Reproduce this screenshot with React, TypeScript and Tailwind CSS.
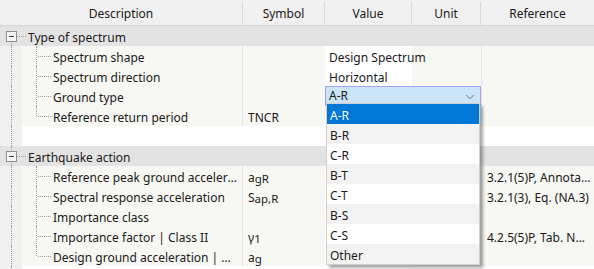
import React from "react";
import { ChevronDown } from "lucide-react";

type Child = {
  label: string;
  symbol?: React.ReactNode;
  value?: string;
  reference?: string;
  combo?: boolean;
};

type Group = {
  title: string;
  children: Child[];
};

const subCls = "text-[11.5px] relative top-[1px] align-baseline";

const groups: Group[] = [
  {
    title: "Type of spectrum",
    children: [
      { label: "Spectrum shape", value: "Design Spectrum" },
      { label: "Spectrum direction", value: "Horizontal" },
      { label: "Ground type", value: "A-R", combo: true },
      { label: "Reference return period", symbol: "TNCR" },
    ],
  },
  {
    title: "Earthquake action",
    children: [
      {
        label: "Reference peak ground acceleration",
        symbol: (
          <>
            a<sub className={subCls}>gR</sub>
          </>
        ),
        reference: "3.2.1(5)P, Annotation 1",
      },
      {
        label: "Spectral response acceleration",
        symbol: (
          <>
            S<sub className={subCls}>ap,R</sub>
          </>
        ),
        reference: "3.2.1(3), Eq. (NA.3)",
      },
      { label: "Importance class" },
      {
        label: "Importance factor | Class II",
        symbol: (
          <>
            γ<sub className={subCls}>1</sub>
          </>
        ),
        reference: "4.2.5(5)P, Tab. NA.6",
      },
      {
        label: "Design ground acceleration | Horizontal",
        symbol: (
          <>
            a<sub className={subCls}>g</sub>
          </>
        ),
      },
    ],
  },
];

const options = ["A-R", "B-R", "C-R", "B-T", "C-T", "B-S", "C-S", "Other"];

function Gutter() {
  return (
    <div className="relative w-[22px] shrink-0 h-full bg-[#f0f0f0]">
      <div className="absolute left-[11px] top-0 bottom-0 border-l border-dotted border-[#a0a0a0]" />
    </div>
  );
}

function GroupRow({ title, first }: { title: string; first: boolean }) {
  return (
    <div className="flex h-5 bg-[#e3e3e3]">
      <div className="relative w-[22px] shrink-0 h-full">
        <div
          className={`absolute left-[11px] ${first ? "top-[10px]" : "top-0"} bottom-0 border-l border-dotted border-[#a0a0a0]`}
        />
        <div className="absolute left-[17px] top-[10px] w-[9px] border-t border-dotted border-[#a0a0a0]" />
        <div className="absolute left-[6px] top-[5px] w-[11px] h-[11px] border border-[#8c8c8c] bg-[#f8f8f8] flex items-center justify-center">
          <div className="w-[5px] h-px bg-[#333]" />
        </div>
      </div>
      <div className="pl-[6px] leading-[24px] whitespace-nowrap">{title}</div>
    </div>
  );
}

function ChildRow({ child, last }: { child: Child; last: boolean }) {
  return (
    <div className="flex h-5 bg-[#f7f7f3]">
      <Gutter />
      <div className="relative w-[221px] shrink-0 border-r border-[#e4e4e4]">
        <div
          className={`absolute left-[14px] top-0 ${last ? "h-[10px]" : "bottom-0"} border-l border-dotted border-[#a0a0a0]`}
        />
        <div className="absolute left-[16px] top-[10px] w-[13px] border-t border-dotted border-[#a0a0a0]" />
        <div className="pl-[31px] pr-[4px] leading-[24px] truncate">{child.label}</div>
      </div>
      <div className="w-[82px] shrink-0 pl-[5px] leading-[24px] whitespace-nowrap">
        {child.symbol}
      </div>
      {child.combo ? (
        <div className="w-[156px] shrink-0 bg-[#cce4f7] border border-[#a3a3f0] flex items-center justify-between pl-[3px] pr-[3px]">
          <span className="leading-[22px]">{child.value}</span>
          <ChevronDown size={14} strokeWidth={1.5} className="text-[#555] mt-[1px]" />
        </div>
      ) : (
        <>
          <div className="w-[87px] shrink-0 bg-white pl-[4px] leading-[24px] whitespace-nowrap">
            {child.value}
          </div>
          <div className="w-[69px] shrink-0" />
        </>
      )}
      <div className="flex-1 min-w-0 border-l border-[#e4e4e4] pl-[5px] pr-[3px] leading-[24px] truncate">
        {child.reference}
      </div>
    </div>
  );
}

function BlankRow() {
  return (
    <div className="flex h-5">
      <Gutter />
      <div className="flex-1 bg-white" />
    </div>
  );
}

export default function App() {
  return (
    <div
      className="relative w-[594px] h-[269px] overflow-hidden bg-white text-[12px] text-[#1a1a1a]"
      style={{ fontFamily: '"Noto Sans", "Open Sans", sans-serif' }}
    >
      <div className="flex h-[26px] bg-[#f0f0f0] border-b border-[#d6d6d6] pt-[2px]">
        <div className="w-[243px] border-r border-[#d9d9d9] flex items-center justify-center">
          Description
        </div>
        <div className="w-[82px] border-r border-[#d9d9d9] flex items-center justify-center">
          Symbol
        </div>
        <div className="w-[87px] border-r border-[#d9d9d9] flex items-center justify-center">
          Value
        </div>
        <div className="w-[69px] border-r border-[#d9d9d9] flex items-center justify-center">
          Unit
        </div>
        <div className="flex-1 flex items-center justify-center">Reference</div>
      </div>

      {groups.map((g, gi) => (
        <React.Fragment key={g.title}>
          <GroupRow title={g.title} first={gi === 0} />
          {g.children.map((c, ci) => (
            <ChildRow key={c.label} child={c} last={ci === g.children.length - 1} />
          ))}
          {gi === 0 && <BlankRow />}
        </React.Fragment>
      ))}
      <BlankRow />

      <div className="absolute left-[326px] top-[103px] w-[154px] border border-[#cfcfcf] bg-white shadow-[3px_3px_3px_rgba(0,0,0,0.35)]">
        {options.map((o, i) => (
          <div
            key={o}
            className={`h-5 leading-[23px] pl-[3px] ${
              i === 0
                ? "bg-[#0078d7] text-white"
                : i % 2 === 1
                ? "bg-[#f3f3f3]"
                : "bg-white"
            }`}
          >
            {o}
          </div>
        ))}
      </div>
    </div>
  );
}
